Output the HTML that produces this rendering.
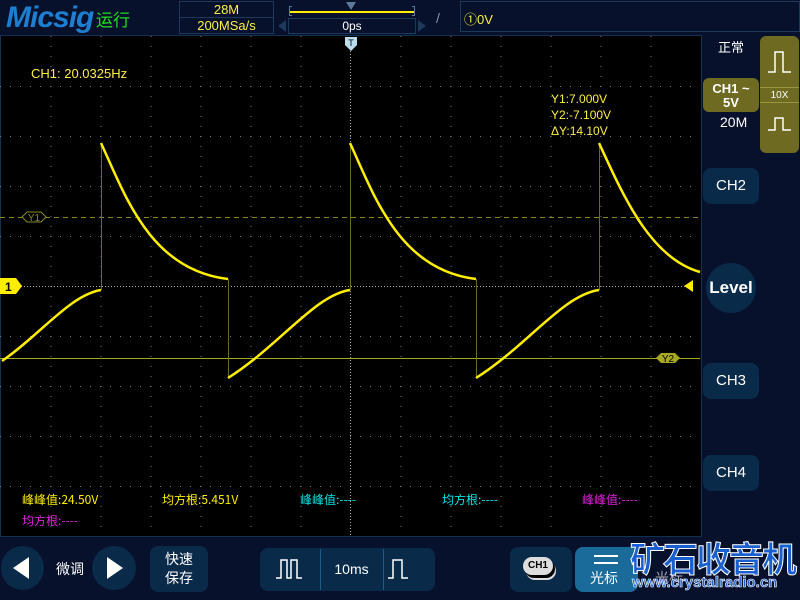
<!DOCTYPE html>
<html><head><meta charset="utf-8"><style>
*{margin:0;padding:0;box-sizing:border-box}
body{width:800px;height:600px;background:#07112b;position:relative;overflow:hidden;font-family:"Liberation Sans","Noto Sans CJK SC",sans-serif;color:#fff}
.a{position:absolute}
.box{position:absolute;background:#0a2a4a;border-radius:8px}
.cn{font-family:"Noto Sans CJK SC",sans-serif}
</style></head><body>
<!-- top bar -->
<div class="a" style="left:6px;top:1px;font:italic bold 30px 'Liberation Sans',sans-serif;color:#1e7fd0;letter-spacing:-1px">Micsig</div>
<div class="a cn" style="left:96px;top:6px;font-size:17px;color:#22dd22">运行</div>
<div class="a" style="left:179px;top:1px;width:95px;height:33px;border:1px solid #1d3a5c"></div>
<div class="a" style="left:179px;top:17px;width:95px;height:1px;background:#1d3a5c"></div>
<div class="a" style="left:179px;top:2px;width:95px;text-align:center;font-size:13px;color:#ffee44">28M</div>
<div class="a" style="left:179px;top:18px;width:95px;text-align:center;font-size:13px;color:#ffee44">200MSa/s</div>
<div class="a" style="left:289px;top:11px;width:126px;height:2px;background:#ffee00"></div>
<div class="a" style="left:289px;top:6px;width:3px;height:10px;border:1px solid #5a7a9a;border-right:none"></div>
<div class="a" style="left:412px;top:6px;width:3px;height:10px;border:1px solid #5a7a9a;border-left:none"></div>
<div class="a" style="left:346px;top:2px;width:0;height:0;border-left:5px solid transparent;border-right:5px solid transparent;border-top:8px solid #5a7a9a"></div>
<div class="a" style="left:288px;top:18px;width:128px;height:16px;border:1px solid #1d3a5c;text-align:center;font-size:12px;line-height:14px">0ps</div>
<div class="a" style="left:278px;top:20px;border-top:6px solid transparent;border-bottom:6px solid transparent;border-right:8px solid #1d3a5c"></div>
<div class="a" style="left:418px;top:20px;border-top:6px solid transparent;border-bottom:6px solid transparent;border-left:8px solid #1d3a5c"></div>
<div class="a" style="left:436px;top:10px;font-size:14px;color:#8899aa">/</div>
<div class="a" style="left:460px;top:1px;width:340px;height:31px;border:1px solid #1d3a5c;font-size:13px;color:#ffee44;padding:7px 3px">①0V</div>
<!-- screen -->
<div class="a" style="left:0;top:35px;width:702px;height:502px;background:#000;border:1px solid #123050"></div>
<svg class="a" style="left:0;top:0" width="702" height="540">
<g stroke="#777" stroke-width="1" stroke-dasharray="1 9">
<path d="M51 36V536M101 36V536M151 36V536M201 36V536M251 36V536M301 36V536M401 36V536M451 36V536M501 36V536M551 36V536M601 36V536M651 36V536"/>
<path d="M0 86.5H700M0 136.5H700M0 186.5H700M0 236.5H700M0 336.5H700M0 386.5H700M0 436.5H700M0 486.5H700"/>
</g>
<path d="M350.5 48V536" stroke="#aaa" stroke-dasharray="1 2"/>
<path d="M0 286.5H690" stroke="#aaa" stroke-dasharray="1 2"/>
<path d="M0 217.5H700" stroke="#8a8a20" stroke-dasharray="5 4"/>
<path d="M0 358.5H700" stroke="#a8a820"/>
<path d="M101.5 143V290M228.5 279V378M350.5 143V290M476.5 279V378M599.5 143V290" stroke="#6a6a20"/>
<g fill="none" stroke="#ffee00" stroke-width="2.5">
<path d="M2 361C40 335 70 295 101 290"/>
<path d="M101 143C125 195 150 270 228 279"/>
<path d="M228 378C280 345 315 295 350 290"/>
<path d="M350 143C374 195 399 270 476 279"/>
<path d="M476 378C528 345 563 295 599 290"/>
<path d="M599 143C623 195 650 258 700 272"/>
</g>
<path d="M22 217l5-5h14l5 5-5 5h-14z" fill="#000" stroke="#8a8a20"/>
<text x="34" y="221" font-size="10" fill="#8a8a20" text-anchor="middle" font-family="Liberation Sans">Y1</text>
<path d="M656 358l5-5h14l5 5-5 5h-14z" fill="#a8a820"/>
<text x="668" y="362" font-size="10" fill="#000" text-anchor="middle" font-family="Liberation Sans">Y2</text>
<path d="M0 278h16l6 8-6 8h-16z" fill="#ffee00"/>
<text x="5" y="291" font-size="12" font-weight="bold" fill="#000" font-family="Liberation Sans">1</text>
<path d="M684 286l9-6v12z" fill="#ffee00"/>
<path d="M345 37h12v8l-6 6-6-6z" fill="#bde"/>
<text x="351" y="46" font-size="9" fill="#000" text-anchor="middle" font-family="Liberation Sans">T</text>
</svg>
<div class="a" style="left:31px;top:66px;font-size:13px;color:#ffee44">CH1: 20.0325Hz</div>
<div class="a" style="left:551px;top:91px;font-size:12px;color:#ffee44;line-height:16px">Y1:7.000V<br>Y2:-7.100V<br>ΔY:14.10V</div>
<div class="a cn" style="left:22px;top:491px;font-size:12px;color:#ffee00">峰峰值:24.50V</div>
<div class="a cn" style="left:162px;top:491px;font-size:12px;color:#ffee00">均方根:5.451V</div>
<div class="a cn" style="left:300px;top:491px;font-size:12px;color:#00e5e5">峰峰值:----</div>
<div class="a cn" style="left:442px;top:491px;font-size:12px;color:#00e5e5">均方根:----</div>
<div class="a cn" style="left:582px;top:491px;font-size:12px;color:#e020e0">峰峰值:----</div>
<div class="a cn" style="left:22px;top:512px;font-size:12px;color:#e020e0">均方根:----</div>
<!-- right panel -->
<div class="a cn" style="left:718px;top:37px;font-size:13px">正常</div>
<div class="a" style="left:760px;top:36px;width:39px;height:117px;background:#6e6a22;border-radius:6px"></div>
<div class="a" style="left:760px;top:87px;width:39px;height:16px;border-top:1px solid #999640;border-bottom:1px solid #999640;font-size:10px;text-align:center;line-height:15px">10X</div>
<svg class="a" style="left:768px;top:48px" width="24" height="90" fill="none" stroke="#fff" stroke-width="1.5"><path d="M0 24h7V4h8v20h8"/><path d="M0 82h7V70h8v12h8"/></svg>
<div class="a" style="left:703px;top:78px;width:56px;height:34px;background:#6e6a22;border-radius:6px;text-align:center;font-weight:bold;font-size:13px;line-height:14px;padding-top:4px">CH1 ~<br>5V</div>
<div class="a" style="left:720px;top:114px;font-size:14px">20M</div>
<div class="box" style="left:703px;top:168px;width:56px;height:36px;text-align:center;line-height:36px;font-size:15px">CH2</div>
<div class="a" style="left:706px;top:263px;width:50px;height:50px;border-radius:50%;background:#0a2a4a;text-align:center;line-height:50px;font-size:17px;font-weight:bold">Level</div>
<div class="box" style="left:703px;top:363px;width:56px;height:36px;text-align:center;line-height:36px;font-size:15px">CH3</div>
<div class="box" style="left:703px;top:455px;width:56px;height:36px;text-align:center;line-height:36px;font-size:15px">CH4</div>
<!-- bottom -->
<div class="a" style="left:1px;top:546px;width:43px;height:44px;border-radius:50%;background:#0a2a4a"></div>
<div class="a" style="left:13px;top:557px;border-top:11px solid transparent;border-bottom:11px solid transparent;border-right:16px solid #fff"></div>
<div class="a cn" style="left:56px;top:559px;font-size:14px">微调</div>
<div class="a" style="left:92px;top:546px;width:44px;height:44px;border-radius:50%;background:#0a2a4a"></div>
<div class="a" style="left:107px;top:557px;border-top:11px solid transparent;border-bottom:11px solid transparent;border-left:16px solid #fff"></div>
<div class="box cn" style="left:150px;top:546px;width:58px;height:46px;font-size:14px;text-align:center;line-height:19px;padding-top:4px">快速<br>保存</div>
<div class="box" style="left:260px;top:548px;width:175px;height:43px"></div>
<div class="a" style="left:320px;top:549px;width:1px;height:41px;background:#1f5c8a"></div>
<div class="a" style="left:383px;top:549px;width:1px;height:41px;background:#1f5c8a"></div>
<div class="a" style="left:320px;top:561px;width:63px;text-align:center;font-size:14px">10ms</div>
<svg class="a" style="left:276px;top:557px" width="140" height="24" fill="none" stroke="#fff" stroke-width="1.5"><path d="M0 21h5V3h6v18h4V3h6v18h5"/><path d="M120 21h5V3h9v18h6" transform="translate(-8 0)"/></svg>
<div class="box" style="left:510px;top:547px;width:62px;height:45px"></div>
<div class="a" style="left:523px;top:557px;width:30px;height:18px;border-radius:9px;background:#ddd;color:#000;font-size:10px;text-align:center;line-height:18px;font-weight:bold;box-shadow:2px 3px 0 #000,3px 5px 0 #ddd">CH1</div>
<div class="box" style="left:575px;top:547px;width:63px;height:45px;background:#1a6a9a"></div>
<div class="a" style="left:594px;top:555px;width:24px;height:9px;border-top:2px solid #fff;border-bottom:2px solid #fff"></div>
<div class="a cn" style="left:590px;top:568px;font-size:14px">光标</div>
<div class="a cn" style="left:655px;top:568px;font-size:14px;color:#aab">光标</div>
<div class="a cn" style="left:630px;top:532px;font-size:35px;font-weight:bold;color:#1a5fd0;-webkit-text-stroke:1px #fff;letter-spacing:-2px">矿石收音机</div>
<div class="a" style="left:632px;top:574px;font-size:15px;font-weight:bold;color:#1a5fd0;-webkit-text-stroke:0.6px #fff">www.crystalradio.cn</div>
</body></html>
